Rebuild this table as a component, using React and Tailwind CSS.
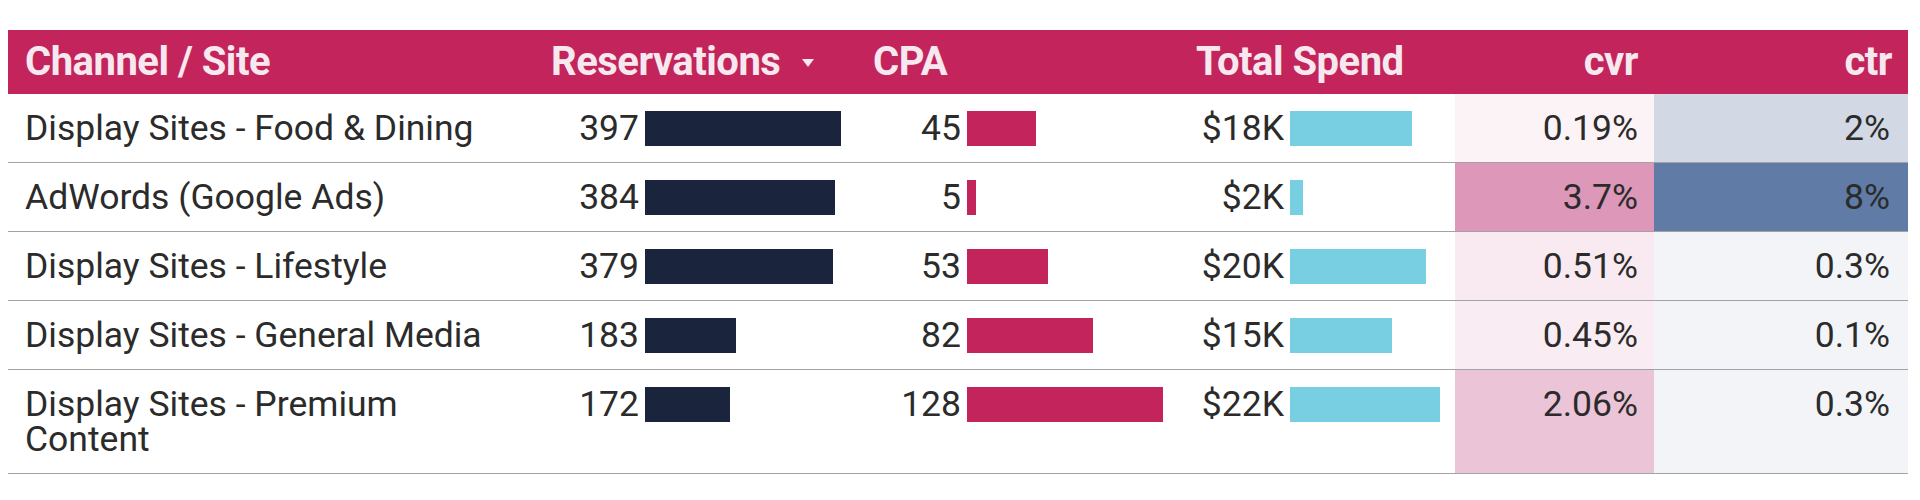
import React from 'react'

const rows = [
    { name: 'Display Sites - Food & Dining', res: 397, resW: 196, cpa: 45, cpaW: 69, spend: '$18K', spendW: 122, cvr: '0.19%', cvrBg: 'bg-[#fbf3f6]', ctr: '2%', ctrBg: 'bg-[#d2d9e4]' },
    { name: 'AdWords (Google Ads)', res: 384, resW: 190, cpa: 5, cpaW: 9, spend: '$2K', spendW: 13, cvr: '3.7%', cvrBg: 'bg-[#dc97b9]', ctr: '8%', ctrBg: 'bg-[#5f7ba6]' },
    { name: 'Display Sites - Lifestyle', res: 379, resW: 188, cpa: 53, cpaW: 81, spend: '$20K', spendW: 136, cvr: '0.51%', cvrBg: 'bg-[#f9e9f1]', ctr: '0.3%', ctrBg: 'bg-[#f2f4f8]' },
    { name: 'Display Sites - General Media', res: 183, resW: 91, cpa: 82, cpaW: 126, spend: '$15K', spendW: 102, cvr: '0.45%', cvrBg: 'bg-[#f9ecf3]', ctr: '0.1%', ctrBg: 'bg-[#f3f4f8]' },
    { name: 'Display Sites - Premium Content', res: 172, resW: 85, cpa: 128, cpaW: 196, spend: '$22K', spendW: 150, cvr: '2.06%', cvrBg: 'bg-[#ebc4d7]', ctr: '0.3%', ctrBg: 'bg-[#f2f4f8]' },
]

const cols = 'grid grid-cols-[526px_322px_323px_276px_199px_254px]'

const BarCell = ({ value, width, color }) => (
    <div className="flex items-start pt-[17px] pb-[16px]">
        <div className="w-[105px] text-right leading-[35px]">{value}</div>
        <div className={`ml-[6px] h-[35px] ${color}`} style={{ width }} />
    </div>
)

const App = () => {
    return (
        <div className="w-[1920px] h-[500px] bg-white pt-[30px] pl-[8px] text-[#2b2b2b]" style={{ fontFamily: 'Roboto, "Liberation Sans", sans-serif' }}>
            <div className="w-[1900px]">
                <div className={`${cols} h-[64px] items-center bg-[#c2245b] text-[#f7e8ef] font-bold text-[40px] tracking-[-0.5px]`}>
                    <div className="pl-[17px]">Channel / Site</div>
                    <div className="pl-[17px] flex items-center">
                        Reservations
                        <svg className="ml-[22px] mt-[2px]" width="12" height="8" viewBox="0 0 12 8">
                            <path d="M0 0 L12 0 L6 8 Z" fill="#f7e8ef" />
                        </svg>
                    </div>
                    <div className="pl-[17px]">CPA</div>
                    <div className="pl-[17px]">Total Spend</div>
                    <div className="pr-[16px] text-right">cvr</div>
                    <div className="pr-[16px] text-right">ctr</div>
                </div>
                {rows.map((r) => (
                    <div key={r.name} className={`${cols} border-b border-[#a3a3a3] text-[35.5px]`}>
                        <div className="pl-[17px] pr-[30px] pt-[17px] pb-[16px] leading-[35px]">{r.name}</div>
                        <BarCell value={r.res} width={r.resW} color="bg-[#1b243d]" />
                        <BarCell value={r.cpa} width={r.cpaW} color="bg-[#c2245b]" />
                        <BarCell value={r.spend} width={r.spendW} color="bg-[#77cfe1]" />
                        <div className={`${r.cvrBg} pr-[16px] pt-[17px] pb-[16px] text-right leading-[35px]`}>{r.cvr}</div>
                        <div className={`${r.ctrBg} pr-[18px] pt-[17px] pb-[16px] text-right leading-[35px]`}>{r.ctr}</div>
                    </div>
                ))}
            </div>
        </div>
    )
}

export default App
